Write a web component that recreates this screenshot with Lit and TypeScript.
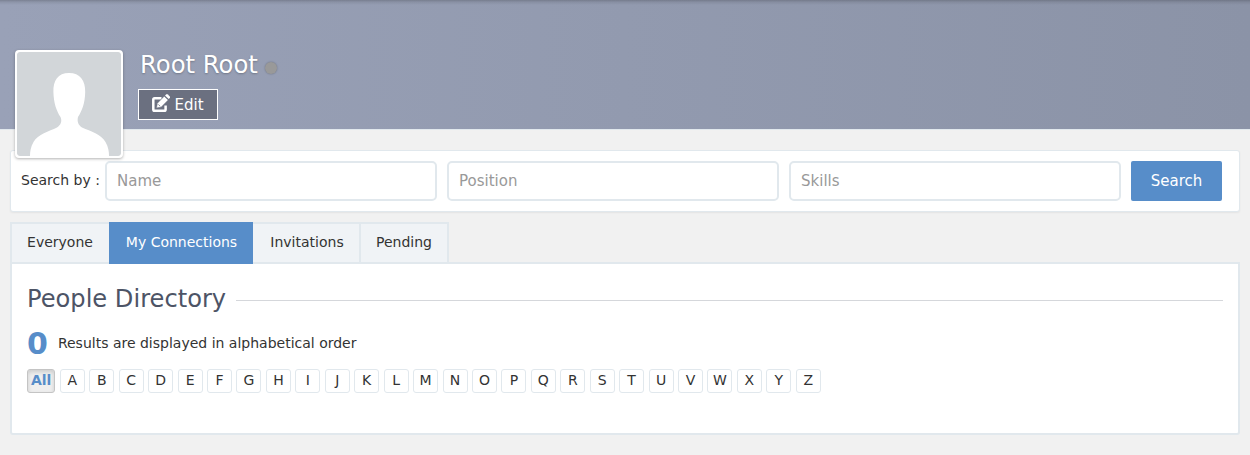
import { LitElement, html, css } from "lit";
import { customElement, state } from "lit/decorators.js";
import { classMap } from "lit/directives/class-map.js";

const LETTERS = "ABCDEFGHIJKLMNOPQRSTUVWXYZ".split("");

const avatar = html`<svg viewBox="0 0 104 104" width="104" height="104">
  <rect width="104" height="104" fill="#d2d6d9" />
  <path fill="#fff" d="M52 21C41 21 36 28.5 36.4 40C36.7 51 39.5 59 43.5 65C45.3 69 44 73 40 75.5C32 79.5 21 82 16.5 90C13.5 95 13 100 13 104H92C92 100 91.5 95 88.500 90C84 82 74 79.500 65 75.500C61 73 60 69 61 65C65 59 68 51 68.200 40C68.500 28.500 63 21 52 21Z" />
</svg>`;

const editIcon = html`<svg viewBox="0 0 18 18" width="18" height="18">
  <path fill="none" stroke="#fff" stroke-width="2.500" stroke-linejoin="round" d="M9.500 4.200H2.600Q1.300 4.200 1.300 5.500V15.400Q1.300 16.700 2.600 16.700H12.300Q13.600 16.700 13.600 15.400V11.500" />
  <path fill="#fff" stroke="#6b7080" stroke-width=".5" d="M4.500 13.900L5.400 9.200L12.200 2.200L16.200 6L9.300 13Z" />
  <path fill="#fff" d="M13 1.500L14.200 .4Q15 -.2 15.800 .5L17.800 2.500Q18.400 3.200 17.800 3.900L16.700 5Z" />
  <path stroke="#6b7080" stroke-width=".8" d="M6.300 10.400L8.100 12.200" />
</svg>`;

@customElement("app-root")
export class AppRoot extends LitElement {
  @state() private tab = "My Connections";
  @state() private letter = "All";

  static styles = css`
    :host {
      display: block;
      height: 455px;
      overflow: hidden;
      background: #f1f1f1;
      color: #333;
      font: 14px/20px "DejaVu Sans", sans-serif;
    }
    * { box-sizing: border-box; }
    .banner {
      display: flex;
      align-items: flex-start;
      height: 130px;
      padding: 50px 15px 0;
      border-bottom: 1px solid #e1e8ed;
      background:
        linear-gradient(to bottom, rgba(0, 0, 0, 0.2), rgba(0, 0, 0, 0.08) 2px, transparent 5px),
        linear-gradient(to right, #99a1b7, #8b93a7);
    }
    .avatar {
      position: relative;
      z-index: 1;
      flex: none;
      width: 108px;
      height: 108px;
      border: 2px solid #fff;
      border-radius: 4px;
      background: #fff;
      box-shadow: 0 1px 3px rgba(0, 0, 0, 0.3);
      overflow: hidden;
    }
    .avatar svg { display: block; border-radius: 3px; }
    .identity { margin-left: 15px; }
    .name {
      display: flex;
      align-items: center;
      height: 29px;
      margin-left: 2px;
      color: #fff;
      font-size: 24.3px;
      text-shadow: 0 1px 2px rgba(0, 0, 0, 0.25);
    }
    .status {
      width: 12px;
      height: 12px;
      margin: 7px 0 0 7px;
      border-radius: 50%;
      background: #999;
      box-shadow: 0 0 2px rgba(0, 0, 0, 0.3);
    }
    .edit {
      display: flex;
      align-items: center;
      width: 80px;
      height: 31px;
      margin-top: 10px;
      padding: 0 0 0 13px;
      border: 1px solid #fff;
      background: #6b7080;
      color: #fff;
      font: 15px/20px "DejaVu Sans", sans-serif;
    }
    .edit svg { flex: none; margin: -3px 4.5px 0 0; }
    .search {
      display: flex;
      height: 62px;
      margin: 20px 10px 0;
      padding: 10px 17px 0 10px;
      border: 1px solid #e1e8ed;
      border-radius: 3px;
      background: #fff;
      box-shadow: 0 1px 2px rgba(0, 0, 0, 0.06);
    }
    .label { width: 84px; line-height: 38px; white-space: nowrap; }
    .field {
      width: 332px;
      height: 40px;
      margin-right: 10px;
      padding: 0 10px;
      border: 2px solid #e1e8ed;
      border-radius: 5px;
      background: #fff;
      font: 15px/20px "DejaVu Sans", sans-serif;
      outline: none;
    }
    .field::placeholder { color: #999; opacity: 1; }
    .submit {
      width: 91px;
      height: 40px;
      padding: 0;
      border: 0;
      border-radius: 2px;
      background: #578dc9;
      color: #fff;
      font: 15px/20px "DejaVu Sans", sans-serif;
    }
    .tabs {
      position: relative;
      display: flex;
      width: 439px;
      height: 42px;
      margin: 10px 0 -2px 10px;
      border: 2px solid #e1e8ed;
      background: #f0f3f6;
    }
    .tab {
      padding: 0 15px 2px;
      border: 0;
      border-right: 2px solid #e1e8ed;
      background: none;
      color: #333;
      font: 14px/36px "DejaVu Sans", sans-serif;
      white-space: nowrap;
    }
    .tab:first-child { width: 97px; padding: 0 16px 2px 15px; }
    .tab:nth-child(3) { width: 108px; padding-left: 17px; }
    .tab:last-child { border-right: 0; }
    .tab.active {
      width: 144px;
      height: 42px;
      margin: -2px 0;
      padding: 0 0 2px 1px;
      border: 0;
      background: #578dc9;
      color: #fff;
    }
    .tab:first-child:not(.active) { border-right: 0; }
    .panel {
      height: 173px;
      margin: 0 10px;
      padding: 20px 15px 0;
      border: 2px solid #e1e8ed;
      border-radius: 0 0 3px 3px;
      background: #fff;
    }
    .title {
      display: flex;
      align-items: center;
      gap: 10px;
      height: 30px;
      margin: 0;
      color: #4d5466;
      font-size: 24.15px;
      font-weight: 400;
      white-space: nowrap;
    }
    .title::after { content: ""; flex: 1; height: 1px; margin-top: 3px; background: #d5d7db; }
    .summary { display: flex; align-items: center; height: 30px; margin-top: 14px; }
    .count { margin: 1px 10px 0 0; color: #578dc9; font-size: 30px; font-weight: 700; }
    .letters { display: flex; gap: 4.45px; margin-top: 11px; }
    .letter {
      flex: none;
      width: 25px;
      height: 24px;
      padding: 0 0 2px;
      border: 1px solid #e1e8ed;
      border-radius: 3px;
      background: #fff;
      color: #333;
      font: 14px/20px "DejaVu Sans", sans-serif;
    }
    .letter:first-child { width: 28.4px; }
    .letter.active {
      border-color: #c4c4c4;
      background: #efefef;
      box-shadow: inset 0 2px 4px rgba(0, 0, 0, 0.15);
      color: #578dc9;
      font-weight: 700;
    }
  `;

  render() {
    return html`
      <header class="banner">
        <div class="avatar">${avatar}</div>
        <div class="identity">
          <div class="name">Root Root<span class="status"></span></div>
          <button class="edit">${editIcon}Edit</button>
        </div>
      </header>
      <div class="search">
        <span class="label">Search by :</span>
        ${["Name", "Position", "Skills"].map((p) => html`<input class="field" placeholder=${p} />`)}
        <button class="submit">Search</button>
      </div>
      <nav class="tabs">
        ${["Everyone", "My Connections", "Invitations", "Pending"].map(
          (t) => html`<button class=${classMap({ tab: true, active: this.tab === t })} @click=${() => (this.tab = t)}>${t}</button>`
        )}
      </nav>
      <main class="panel">
        <h1 class="title">People Directory</h1>
        <div class="summary"><span class="count">0</span>Results are displayed in alphabetical order</div>
        <div class="letters">
          ${["All", ...LETTERS].map(
            (l) => html`<button class=${classMap({ letter: true, active: this.letter === l })} @click=${() => (this.letter = l)}>${l}</button>`
          )}
        </div>
      </main>
    `;
  }
}
